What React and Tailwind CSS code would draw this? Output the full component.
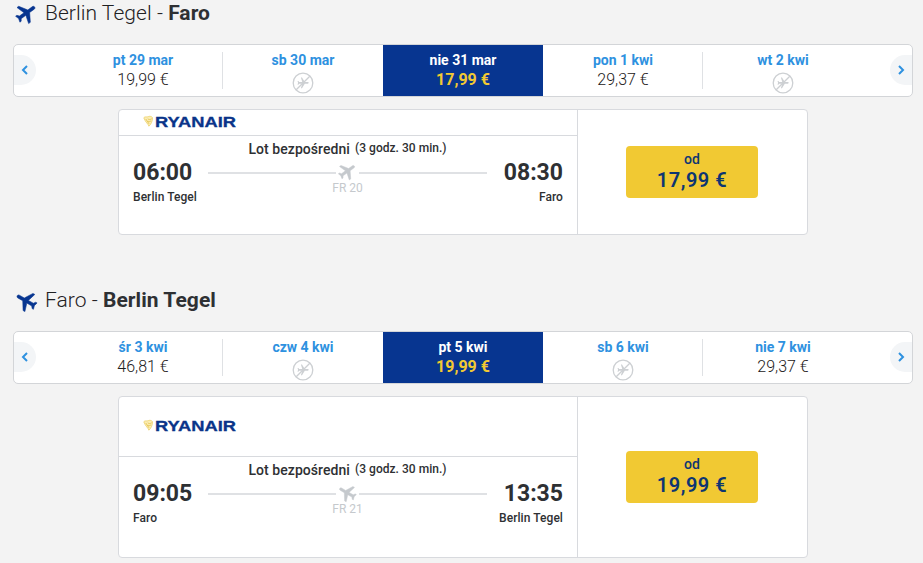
const PLANE =
  'M21 16v-2l-8-5V3.500c0-.83-.67-1.500-1.500-1.500S10 2.670 10 3.500V9l-8 5v2l8-2.500V19l-2 1.500V22l3.500-1 3.500 1v-1.500L13 19v-5.500l8 2.500z';

function Plane({ className, back }) {
  return (
    <svg viewBox="0 0 24 24" className={className} fill="currentColor" stroke="currentColor" strokeWidth=".5" strokeLinejoin="round">
      <g transform={back ? 'rotate(-60 12 12)' : 'rotate(54 12 12)'}>
        <path d={PLANE} />
      </g>
    </svg>
  );
}

function NoFlight() {
  return (
    <svg viewBox="0 0 22 22" className="mt-[3px] size-[22px] shrink-0 text-[#cdd0d3]" fill="none" stroke="currentColor">
      <circle cx="11" cy="11" r="9.8" strokeWidth="1.3" />
      <g transform="translate(4.4 4.4) scale(.56) rotate(90 12 12)" fill="currentColor" stroke="none">
        <path d={PLANE} />
      </g>
      <path d="M4.2 17.8 17.8 4.2" strokeWidth="1.3" />
    </svg>
  );
}

function Logo() {
  return (
    <svg width="94" height="14" viewBox="0 0 94 14" className="block">
      <path d="M.8 2.800C2 1 3.800 2.600 5.300 1.600 6.800 1 8.500 1.400 9.500 2.600 9.600 6 8 9.500 5.900 11.200 5.300 9 2.300 7.200.8 2.800Z" fill="#fbedb4" stroke="#ecd06a" strokeWidth=".8" />
      <path d="M2.800 4 6 8.800M4.800 3.800C6 4.800 7 4.800 8.600 3.800M5 6.200C6 6.900 7 6.700 8 5.800" fill="none" stroke="#e3bf45" strokeWidth=".8" />
      <text x="12" y="12" textLength="81" lengthAdjust="spacingAndGlyphs" fill="#0a3489" stroke="#0a3489" strokeWidth=".3" fontFamily="Liberation Sans, sans-serif" fontWeight="700" fontSize="14">
        RYANAIR
      </text>
    </svg>
  );
}

function Arrow({ right }) {
  return (
    <div className={`flex w-[49px] items-center pb-[2px] ${right ? 'justify-end' : ''}`}>
      <button
        className={`flex h-[30px] w-[22px] items-center justify-center bg-[#f3f5f7] text-[#2e91e0] ${
          right ? 'rounded-l-full' : 'rounded-r-full'
        }`}
      >
        <svg width="8" height="10" viewBox="0 0 8 10" fill="none" stroke="currentColor" strokeWidth="2">
          <path d={right ? 'M2 1l4 4-4 4' : 'M6 1L2 5l4 4'} />
        </svg>
      </button>
    </div>
  );
}

function Day({ label, price, active, divider }) {
  return (
    <div className={`flex w-40 items-center ${active ? 'bg-[#073590]' : ''}`}>
      <div
        className={`flex h-[37px] flex-1 justify-center border-r pl-px ${divider ? 'border-[#dfe1e4]' : 'border-transparent'}`}
      >
        <div className="-mt-px flex flex-col items-center">
          <div className={`text-[14px] leading-[18px] font-bold ${active ? 'text-white' : 'text-[#2e91e0]'}`}>{label}</div>
          {price ? (
            <div className={`mt-px text-[16px] leading-[20px] ${active ? 'font-bold text-[#f1c933]' : 'font-light text-[#1c2020]'}`}>
              {price}
            </div>
          ) : (
            <NoFlight />
          )}
        </div>
      </div>
    </div>
  );
}

function DayBar({ days }) {
  return (
    <div className="flex h-[53px] w-[900px] overflow-hidden rounded-[5px] border border-[#d3d5d8] bg-white">
      <Arrow />
      {days.map((d) => (
        <Day key={d.label} {...d} />
      ))}
      <Arrow right />
    </div>
  );
}

function Line() {
  return <div className="h-[2px] w-[128px] bg-[#dfe1e4]" />;
}

function Stop({ time, place, right }) {
  return (
    <div className={`w-[75px] whitespace-nowrap ${right ? 'text-right' : ''}`}>
      <div className="pt-px text-[23px] leading-[26px] font-bold">{time}</div>
      <div className="mt-[2px] text-[12px] leading-[18px] font-medium tracking-[.06px]">{place}</div>
    </div>
  );
}

function FlightCard({ tall, back, dep, arr, from, to, no, price }) {
  return (
    <div
      className={`mt-3 ml-[105px] flex w-[690px] rounded-[4px] border border-[#d8dade] bg-white text-[#2e3033] ${
        tall ? 'h-[162px]' : 'h-[126px]'
      }`}
    >
      <div className="flex w-[459px] flex-col border-r border-[#d8dade]">
        <div className={`flex items-center border-b border-[#d8dade] pb-[2px] pl-6 ${tall ? 'h-[60px]' : 'h-[26px]'}`}>
          <Logo />
        </div>
        <div className="mt-[3px] flex h-5 justify-center pr-[1px] font-medium">
          <span className="text-[14px] leading-[20px] tracking-[.06px]">Lot bezpośredni</span>
          <span className="ml-[5px] text-[12px] leading-[18px] tracking-[.03px]">(3 godz. 30 min.)</span>
        </div>
        <div className="flex justify-between pr-[14px] pl-[14px]">
          <Stop time={dep} place={from} />
          <div className="flex flex-col items-center pr-px">
            <div className="flex h-[27px] items-center">
              <Line />
              <Plane back={back} className="mx-px -mt-[3px] size-[21px] text-[#c5c9cd]" />
              <Line />
            </div>
            <div className="-mt-[7px] text-[12px] leading-[18px] text-[#c5c9cd]">{no}</div>
          </div>
          <Stop time={arr} place={to} right />
        </div>
      </div>
      <div className="flex flex-1 justify-center pr-[2px]">
        <button
          className={`flex h-[52px] w-[132px] flex-col items-center rounded-[4px] bg-[#f1c933] pt-[4px] pl-px font-medium text-[#0d3572] ${
            tall ? 'mt-[54px]' : 'mt-9'
          }`}
        >
          <span className="text-[14px] leading-[18px]">od</span>
          <span className="text-[20px] leading-[24px] font-semibold tracking-[.5px]">{price}</span>
        </button>
      </div>
    </div>
  );
}

function Heading({ from, to, back }) {
  return (
    <h2 className="flex h-[26px] items-center text-[21px] font-light tracking-[.05px] text-[#1f2123]">
      <Plane back={back} className="mr-[6px] ml-px size-[25px] text-[#073590]" />
      <span className="pt-[2px] whitespace-pre">
        {from} - <b className="font-bold text-[#2e3033]">{to}</b>
      </span>
    </h2>
  );
}

const outbound = [
  { label: 'pt 29 mar', price: '19,99 €', divider: true },
  { label: 'sb 30 mar' },
  { label: 'nie 31 mar', price: '17,99 €', active: true },
  { label: 'pon 1 kwi', price: '29,37 €', divider: true },
  { label: 'wt 2 kwi' },
];

const inbound = [
  { label: 'śr 3 kwi', price: '46,81 €', divider: true },
  { label: 'czw 4 kwi' },
  { label: 'pt 5 kwi', price: '19,99 €', active: true },
  { label: 'sb 6 kwi', divider: true },
  { label: 'nie 7 kwi', price: '29,37 €' },
];

export default function App() {
  return (
    <div className="h-[563px] w-[923px] overflow-hidden bg-[#f3f3f3] pl-[13px] font-[Roboto,sans-serif]">
      <section>
        <Heading from="Berlin Tegel" to="Faro" />
        <div className="mt-[18px]">
          <DayBar days={outbound} />
        </div>
        <FlightCard dep="06:00" arr="08:30" from="Berlin Tegel" to="Faro" no="FR 20" price="17,99 €" />
      </section>
      <section className="mt-[52px]">
        <Heading from="Faro" to="Berlin Tegel" back />
        <div className="mt-[18px]">
          <DayBar days={inbound} />
        </div>
        <FlightCard tall back dep="09:05" arr="13:35" from="Faro" to="Berlin Tegel" no="FR 21" price="19,99 €" />
      </section>
    </div>
  );
}
